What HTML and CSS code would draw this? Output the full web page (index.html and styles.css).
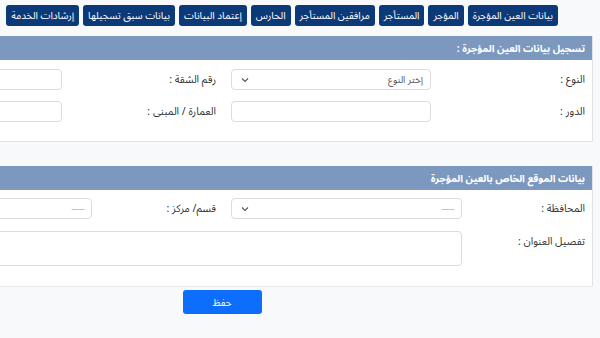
FILE: index.html
```html
<!DOCTYPE html>
<html lang="ar" dir="rtl">
<head>
    <meta charset="UTF-8">
    <title>تسجيل عقد إيجار</title>
    <link rel="stylesheet" href="styles.css">
</head>
<body>
    <div class="page">
        <div class="tabs-cont">
            <div class="tab">بيانات العين المؤجرة</div>
            <div class="tab">المؤجر</div>
            <div class="tab">المستأجر</div>
            <div class="tab">مرافقين المستأجر</div>
            <div class="tab">الحارس</div>
            <div class="tab">إعتماد البيانات</div>
            <div class="tab">بيانات سبق تسجيلها</div>
            <div class="tab">إرشادات الخدمة</div>
        </div>

        <!-- بيانات العين -->
        <div class="card card-unit">
            <div class="card-head">تسجيل بيانات العين المؤجرة :</div>
            <div class="card-body">
                <div class="form-row">
                    <div class="label">النوع :</div>
                    <div class="control select">
                        <span>إختر النوع</span>
                        <svg width="8" height="6" viewBox="0 0 8 6"><path d="M1 1.5 4 4.5 7 1.5" fill="none" stroke="#555" stroke-width="1.1"/></svg>
                    </div>
                    <div class="label label2">رقم الشقة :</div>
                    <div class="control control2"></div>
                </div>
                <div class="form-row">
                    <div class="label">الدور :</div>
                    <div class="control"></div>
                    <div class="label label2">العمارة / المبنى :</div>
                    <div class="control control2"></div>
                </div>
            </div>
        </div>

        <!-- الموقع -->
        <div class="card card-place">
            <div class="card-head">بيانات الموقع الخاص بالعين المؤجرة</div>
            <div class="card-body">
                <div class="form-row">
                    <div class="label">المحافظة :</div>
                    <div class="control select">
                        <span class="dash">-----</span>
                        <svg width="8" height="6" viewBox="0 0 8 6"><path d="M1 1.5 4 4.5 7 1.5" fill="none" stroke="#555" stroke-width="1.1"/></svg>
                    </div>
                    <div class="label label2">قسم/ مركز :</div>
                    <div class="control control2 select">
                        <span class="dash">-----</span>
                    </div>
                </div>
                <div class="form-row">
                    <div class="label">تفصيل العنوان :</div>
                    <div class="control address"></div>
                </div>
            </div>
        </div>

        <div class="footer">
            <button class="save-btn">حفظ</button>
        </div>
    </div>
</body>
</html>
```

FILE: styles.css
```css
* {
    box-sizing: border-box;
}

body {
    margin: 0;
    padding: 0;
    background-color: #f8f9fa;
    font-family: "Noto Sans Arabic", "DejaVu Sans", sans-serif;
    color: #333;
    overflow: hidden;
}

.page {
    width: 742px;
    margin-right: 7px;
    direction: rtl;
}

.tabs-cont {
    display: flex;
    gap: 4px;
    padding: 5px 35px 0 0;
    height: 36px;
}

.tab {
    height: 21px;
    padding: 0 5px;
    display: flex;
    align-items: center;
    background-color: #0c3a78;
    color: white;
    font-size: 10px;
    border-radius: 3px;
    white-space: nowrap;
}

.card {
    background-color: white;
    border: 1px solid #e4e4e4;
    border-top: none;
}

.card-head {
    height: 24px;
    background-color: #7c98bf;
    color: white;
    font-size: 10px;
    font-weight: bold;
    display: flex;
    align-items: center;
    padding-right: 7px;
}

.card-body {
    display: flex;
    flex-direction: column;
}

.card-unit .card-body {
    padding: 9px 7px 19px 0;
    gap: 11px;
}

.card-place {
    margin-top: 24px;
}

.card-place .card-body {
    padding: 8px 7px 20px 0;
    gap: 12px;
}

.form-row {
    display: flex;
    align-items: flex-start;
}

.label {
    width: 154px;
    height: 21px;
    display: flex;
    align-items: center;
    font-size: 10.5px;
    color: #333;
}

.card-place .label {
    width: 123px;
}

.control {
    width: 200px;
    height: 21px;
    border: 1px solid #dcdcdc;
    border-radius: 4px;
    background-color: white;
}

.card-place .control {
    width: 231px;
}

.label2 {
    width: 169px !important;
    padding-right: 15px;
}

.card-place .label2 {
    width: 139px !important;
}

.control2 {
    width: 180px !important;
}

.select {
    display: flex;
    align-items: center;
    justify-content: space-between;
    padding: 0 7px 0 9px;
    font-size: 9.5px;
    color: #555;
}

.dash {
    color: #aaa;
    letter-spacing: -0.5px;
}

.address {
    width: 500px !important;
    height: 35px;
}

.footer {
    border-top: 1px solid #e8e8e8;
    margin-top: -1px;
    display: flex;
    justify-content: center;
    padding-top: 3px;
}

.save-btn {
    width: 79px;
    height: 24px;
    border: none;
    border-radius: 3px;
    background-color: #0d6efd;
    color: white;
    font-family: inherit;
    font-size: 10px;
}
```
